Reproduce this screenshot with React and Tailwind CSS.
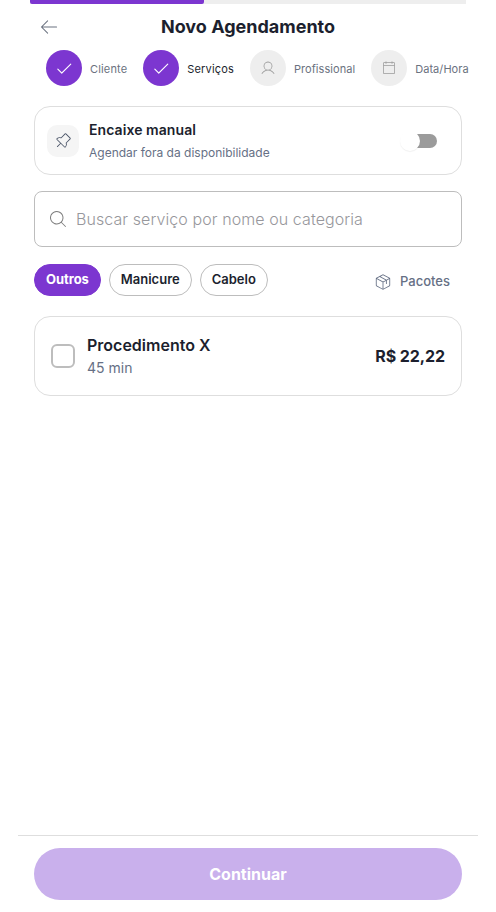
import React, { useState } from 'react';
import {
    PiArrowLeftLight,
    PiCheck,
    PiUserLight,
    PiCalendarBlankLight,
    PiPushPinLight,
    PiMagnifyingGlassLight,
    PiPackageLight,
} from 'react-icons/pi';

const steps = [
    { label: 'Cliente', icon: PiCheck, done: true },
    { label: 'Serviços', icon: PiCheck, done: true, current: true },
    { label: 'Profissional', icon: PiUserLight },
    { label: 'Data/Hora', icon: PiCalendarBlankLight },
];

const categories = ['Outros', 'Manicure', 'Cabelo'];

const services = [
    { id: 1, name: 'Procedimento X', duration: '45 min', price: 'R$ 22,22' },
];

const Step = ({ step }) => {
    const Icon = step.icon;
    return (
        <div className="flex items-center gap-2">
            <div className={`flex size-9 shrink-0 items-center justify-center rounded-full ${step.done ? 'bg-[#7c36d0] text-white' : 'bg-[#eeeeee] text-[#9a9a9a]'}`}>
                <Icon size={step.done ? 18 : 16} />
            </div>
            <span className={`mt-0.5 text-[11px] leading-4 whitespace-nowrap ${step.done ? 'tracking-[0.16px]' : 'tracking-[0.06px]'} ${step.current ? 'text-[#1c1f2e]' : 'text-[#6b7280]'}`}>
                {step.label}
            </span>
        </div>
    );
};

const App = () => {
    const [category, setCategory] = useState('Outros');
    const [manual, setManual] = useState(false);

    return (
        <div className="flex h-[912px] w-[496px] flex-col overflow-hidden bg-white font-['Inter',sans-serif] text-[#1c1f2e]">
            {/* Progress */}
            <div className="mx-[30px] h-1 shrink-0 bg-[#eeeeee]">
                <div className="h-1 w-[174px] rounded-b-xs bg-[#7c36d0]" />
            </div>

            {/* Header */}
            <header className="grid h-[46px] shrink-0 grid-cols-[24px_1fr_24px] items-center px-[37px]">
                <button className="flex justify-center text-[#6b7280]" aria-label="Voltar">
                    <PiArrowLeftLight size={22} />
                </button>
                <h1 className="text-center text-lg font-bold">Novo Agendamento</h1>
            </header>

            <div className="flex shrink-0 gap-4 pl-[46px]">
                {steps.map((step) => (
                    <Step key={step.label} step={step} />
                ))}
            </div>

            <main className="mt-5 flex-1 px-[34px]">
                {/* Manual fit-in */}
                <div className="flex h-[69px] items-center rounded-2xl border border-[#dedede] pr-6 pl-3">
                    <div className="flex size-8 items-center justify-center rounded-[10px] bg-[#f5f5f5] text-[#4b5568]">
                        <PiPushPinLight size={18} />
                    </div>
                    <div className="ml-2.5 flex-1">
                        <p className="mt-px text-sm leading-5 font-semibold tracking-[0.07px]">Encaixe manual</p>
                        <p className="mt-[3px] text-xs leading-5 text-[#667085]">Agendar fora da disponibilidade</p>
                    </div>
                    <button
                        className="relative h-3.5 w-[34px] rounded-full bg-[#9b9b9b]"
                        aria-label="Encaixe manual"
                        onClick={() => setManual(!manual)}
                    >
                        <span className={`absolute -top-[3px] size-5 rounded-full bg-white shadow-[0_1px_1px_rgba(0,0,0,0.06)] ${manual ? '-right-[3px]' : '-left-[3px]'}`} />
                    </button>
                </div>

                {/* Search */}
                <div className="mt-4 flex h-14 items-center gap-2 rounded-lg border border-[#bdbdbd] px-[13px]">
                    <PiMagnifyingGlassLight size={20} className="text-[#7d7d7d]" />
                    <input
                        className="flex-1 text-base font-light tracking-[0.08px] outline-none placeholder:text-[#97979c]"
                        placeholder="Buscar serviço por nome ou categoria"
                    />
                </div>

                {/* Categories */}
                <div className="mt-[17px] flex items-center gap-2">
                    {categories.map((item) => (
                        <button
                            key={item}
                            onClick={() => setCategory(item)}
                            className={`h-8 rounded-full border px-[11px] text-[13px] ${item === category ? 'border-[#7c36d0] bg-[#7c36d0] font-bold tracking-[-0.05px] text-white' : 'border-[#bdbdbd] bg-white font-semibold'}`}
                        >
                            {item}
                        </button>
                    ))}
                    <button className="mt-1 mr-3 ml-auto flex items-center gap-2 text-[13px] font-medium text-[#667085]">
                        <PiPackageLight size={18} />
                        Pacotes
                    </button>
                </div>

                {/* Services */}
                <div className="mt-5 flex flex-col gap-3">
                    {services.map((service) => (
                        <label key={service.id} className="flex h-20 items-center rounded-2xl border border-[#dedede] px-4">
                            <span className="size-6 rounded-md border-2 border-[#bdbdbd]" />
                            <span className="ml-3 flex flex-1 flex-col">
                                <span className="text-base leading-6 font-semibold">{service.name}</span>
                                <span className="text-sm leading-[22px] text-[#667085]">{service.duration}</span>
                            </span>
                            <span className="text-base font-bold tracking-[-0.1px]">{service.price}</span>
                        </label>
                    ))}
                </div>
            </main>

            <footer className="mx-[18px] shrink-0 border-t border-[#dedede] px-4 pt-3 pb-3">
                <button className="h-13 w-full rounded-full bg-[#c9b0ec] text-base font-bold text-white">Continuar</button>
            </footer>
        </div>
    );
};

export default App;
